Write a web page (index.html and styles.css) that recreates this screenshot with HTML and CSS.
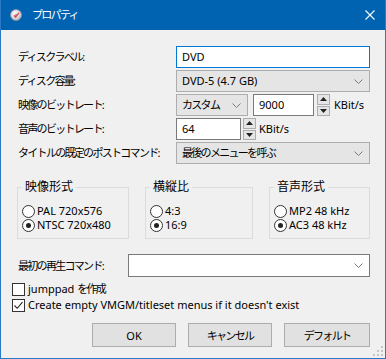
FILE: index.html
```html
<!DOCTYPE html>
<html lang="ja">
<head>
<meta charset="utf-8">
<title>プロパティ</title>
<link rel="stylesheet" href="styles.css">
</head>
<body>
<div class="window">
  <div class="titlebar">
    <svg class="app-icon" width="12" height="12" viewBox="0 0 12 12">
      <defs>
        <radialGradient id="disc" cx="0.4" cy="0.35" r="0.7">
          <stop offset="0" stop-color="#ffffff"/>
          <stop offset="1" stop-color="#b9b9c4"/>
        </radialGradient>
      </defs>
      <circle cx="6" cy="6" r="5.5" fill="url(#disc)" stroke="#8e8e98" stroke-width="0.8"/>
      <circle cx="6" cy="6" r="1.1" fill="#9a9aa6"/>
      <path d="M4 6.4 L5.6 8 L8.8 3.8" fill="none" stroke="#e0344a" stroke-width="1.2"/>
    </svg>
    <span class="title ja">プロパティ</span>
    <svg class="close" width="10" height="10" viewBox="0 0 10 10">
      <path d="M0.5 0.5 L9.5 9.5 M9.5 0.5 L0.5 9.5" stroke="#fff" stroke-width="1.1"/>
    </svg>
  </div>
  <div class="content">
    <div class="form">
      <div class="label ja">ディスクラベル:</div>
      <div class="edit focused">DVD</div>

      <div class="label ja">ディスク容量:</div>
      <div class="combo"><span>DVD-5 (4.7 GB)</span><svg class="chev" width="9" height="5" viewBox="0 0 9 5"><path d="M0.5 0.5 L4.5 4.5 L8.5 0.5" fill="none" stroke="#7a7a7a" stroke-width="1"/></svg></div>

      <div class="label ja">映像のビットレート:</div>
      <div class="inline">
        <div class="combo c-mode"><span class="ja">カスタム</span><svg class="chev" width="9" height="5" viewBox="0 0 9 5"><path d="M0.5 0.5 L4.5 4.5 L8.5 0.5" fill="none" stroke="#7a7a7a" stroke-width="1"/></svg></div>
        <div class="edit e-video">9000</div>
        <div class="spin s-video">
          <div class="sb"><svg width="7" height="4" viewBox="0 0 7 4"><path d="M0 4 L3.5 0 L7 4Z" fill="#222"/></svg></div>
          <div class="sb"><svg width="7" height="4" viewBox="0 0 7 4"><path d="M0 0 L3.5 4 L7 0Z" fill="#222"/></svg></div>
        </div>
        <span class="unit">KBit/s</span>
      </div>

      <div class="label ja">音声のビットレート:</div>
      <div class="inline">
        <div class="edit e-audio">64</div>
        <div class="spin s-audio">
          <div class="sb"><svg width="7" height="4" viewBox="0 0 7 4"><path d="M0 4 L3.5 0 L7 4Z" fill="#222"/></svg></div>
          <div class="sb"><svg width="7" height="4" viewBox="0 0 7 4"><path d="M0 0 L3.5 4 L7 0Z" fill="#222"/></svg></div>
        </div>
        <span class="unit">KBit/s</span>
      </div>

      <div class="label ja">タイトルの既定のポストコマンド:</div>
      <div class="combo"><span class="ja">最後のメニューを呼ぶ</span><svg class="chev" width="9" height="5" viewBox="0 0 9 5"><path d="M0.5 0.5 L4.5 4.5 L8.5 0.5" fill="none" stroke="#7a7a7a" stroke-width="1"/></svg></div>
    </div>

    <div class="groups">
      <div class="group g-video">
        <span class="legend">映像形式</span>
        <div class="radios">
          <div class="radio"><span class="rb"></span><span>PAL 720x576</span></div>
          <div class="radio"><span class="rb on"></span><span>NTSC 720x480</span></div>
        </div>
      </div>
      <div class="group g-aspect">
        <span class="legend">横縦比</span>
        <div class="radios">
          <div class="radio"><span class="rb"></span><span>4:3</span></div>
          <div class="radio"><span class="rb on"></span><span>16:9</span></div>
        </div>
      </div>
      <div class="group g-audio">
        <span class="legend">音声形式</span>
        <div class="radios">
          <div class="radio"><span class="rb"></span><span>MP2 48 kHz</span></div>
          <div class="radio"><span class="rb on"></span><span>AC3 48 kHz</span></div>
        </div>
      </div>
    </div>

    <div class="firstrow">
      <div class="label first-label ja">最初の再生コマンド:</div>
      <div class="combo editable"><span></span><svg class="chev" width="9" height="5" viewBox="0 0 9 5"><path d="M0.5 0.5 L4.5 4.5 L8.5 0.5" fill="none" stroke="#7a7a7a" stroke-width="1"/></svg></div>
    </div>

    <div class="checks">
      <div class="check"><span class="cb"></span><span>jumppad <span class="ja">を作成</span></span></div>
      <div class="check"><span class="cb"><svg width="11" height="11" viewBox="0 0 11 11"><path d="M1.5 5.5 L4.2 8.3 L9.5 2.2" fill="none" stroke="#222" stroke-width="1.1"/></svg></span><span>Create empty VMGM/titleset menus if it doesn't exist</span></div>
    </div>

    <div class="buttons">
      <div class="btn b-ok">OK</div>
      <div class="btn b-cancel"><span class="ja">キャンセル</span></div>
      <div class="btn b-default"><span class="ja">デフォルト</span></div>
    </div>
  </div>
  <svg class="grip" width="10" height="10" viewBox="0 0 10 10">
    <rect x="8" y="0" width="2" height="2" fill="#c4c4c4"/>
    <rect x="4" y="4" width="2" height="2" fill="#c4c4c4"/>
    <rect x="8" y="4" width="2" height="2" fill="#c4c4c4"/>
    <rect x="0" y="8" width="2" height="2" fill="#c4c4c4"/>
    <rect x="4" y="8" width="2" height="2" fill="#c4c4c4"/>
    <rect x="8" y="8" width="2" height="2" fill="#c4c4c4"/>
  </svg>
</div>
</body>
</html>
```

FILE: styles.css
```css
* { box-sizing: border-box; }
html, body { margin: 0; padding: 0; background: #f0f0f0; }
body {
  font-family: "Noto Sans", "Noto Sans CJK JP", sans-serif;
  font-size: 11px;
  color: #000;
}
.ja { font-size: 11px; letter-spacing: -1.7px; }

.window {
  position: relative;
  width: 386px;
  height: 359px;
  display: flex;
  flex-direction: column;
  background: #f0f0f0;
  border: 1px solid #2b78c5;
  border-top: none;
}

.titlebar {
  height: 30px;
  flex: none;
  background: #0063b1;
  color: #fff;
  display: flex;
  align-items: center;
  padding-left: 9px;
}
.app-icon { flex: none; }
.title { margin-left: 10px; line-height: 16px; }
.close { margin-left: auto; margin-right: 10px; }

.content {
  flex: 1;
  display: flex;
  flex-direction: column;
  padding: 16px 15px 0 16px;
}

.form {
  display: grid;
  grid-template-columns: 159px 1fr;
  grid-auto-rows: 22px;
  row-gap: 2px;
  align-items: center;
}
.label { padding-left: 1px; line-height: 22px; white-space: nowrap; }

.edit {
  height: 22px;
  border: 1px solid #7a7a7a;
  background: #fff;
  padding-left: 5px;
  line-height: 20px;
  white-space: nowrap;
}
.edit.focused { border-color: #0078d7; }

.combo {
  height: 22px;
  border: 1px solid #adadad;
  background: #e5e5e5;
  padding-left: 5px;
  line-height: 20px;
  display: flex;
  align-items: center;
  justify-content: space-between;
  white-space: nowrap;
}
.combo .chev { flex: none; margin-right: 6px; }
.combo.editable { background: #fff; border-color: #7a7a7a; }

.inline { display: flex; align-items: center; height: 22px; }
.c-mode { width: 72px; margin-right: 5px; }
.e-video { width: 61px; margin-right: 3px; }
.e-audio { width: 65px; margin-right: 2px; }
.spin {
  width: 13px;
  height: 22px;
  display: flex;
  flex-direction: column;
  gap: 1px;
  margin-right: 3px;
}
.sb {
  flex: 1;
  border: 1px solid #adadad;
  background: #e5e5e5;
  display: flex;
  align-items: center;
  justify-content: center;
}
.s-video { margin-right: 4px; }
.unit { line-height: 22px; }

.groups {
  display: flex;
  gap: 16px;
  margin-top: 23px;
}
.group {
  height: 52px;
  border: 1px solid #dcdcdc;
  padding: 0 0 0 4px;
  display: flex;
  flex-direction: column;
  align-items: flex-start;
}
.g-video { width: 112px; }
.g-aspect { width: 108px; }
.g-audio { width: 101px; }
.legend {
  margin-top: -9px;
  padding: 0 3px;
  line-height: 16px;
  background: #f0f0f0;
  font-size: 12px;
}
.radios { margin-top: 9px; display: flex; flex-direction: column; }
.radio { display: flex; align-items: center; height: 14px; line-height: 14px; gap: 2px; white-space: nowrap; }
.rb {
  width: 13px;
  height: 13px;
  border: 1px solid #333;
  border-radius: 50%;
  background: #fff;
  display: flex;
  align-items: center;
  justify-content: center;
  flex: none;
}
.rb.on::after {
  content: "";
  width: 5px;
  height: 5px;
  border-radius: 50%;
  background: #222;
}

.firstrow { display: flex; align-items: center; height: 23px; margin-top: 15px; }
.first-label { width: 111px; flex: none; }
.firstrow .combo { flex: 1; height: 23px; }

.checks { margin-top: 4px; margin-left: -5px; display: flex; flex-direction: column; }
.check { display: flex; align-items: center; height: 16px; line-height: 16px; gap: 3px; white-space: nowrap; }
.cb {
  width: 13px;
  height: 13px;
  border: 1px solid #333;
  background: #fff;
  flex: none;
  display: flex;
  align-items: center;
  justify-content: center;
}

.buttons {
  margin-top: 10px;
  display: flex;
  justify-content: flex-end;
  gap: 12px;
}
.btn {
  height: 24px;
  border: 1px solid #adadad;
  background: #e1e1e1;
  display: flex;
  align-items: center;
  justify-content: center;
}
.b-ok, .b-cancel { width: 84px; }
.b-default { width: 86px; }

.grip { position: absolute; right: 2px; bottom: 2px; }
```
